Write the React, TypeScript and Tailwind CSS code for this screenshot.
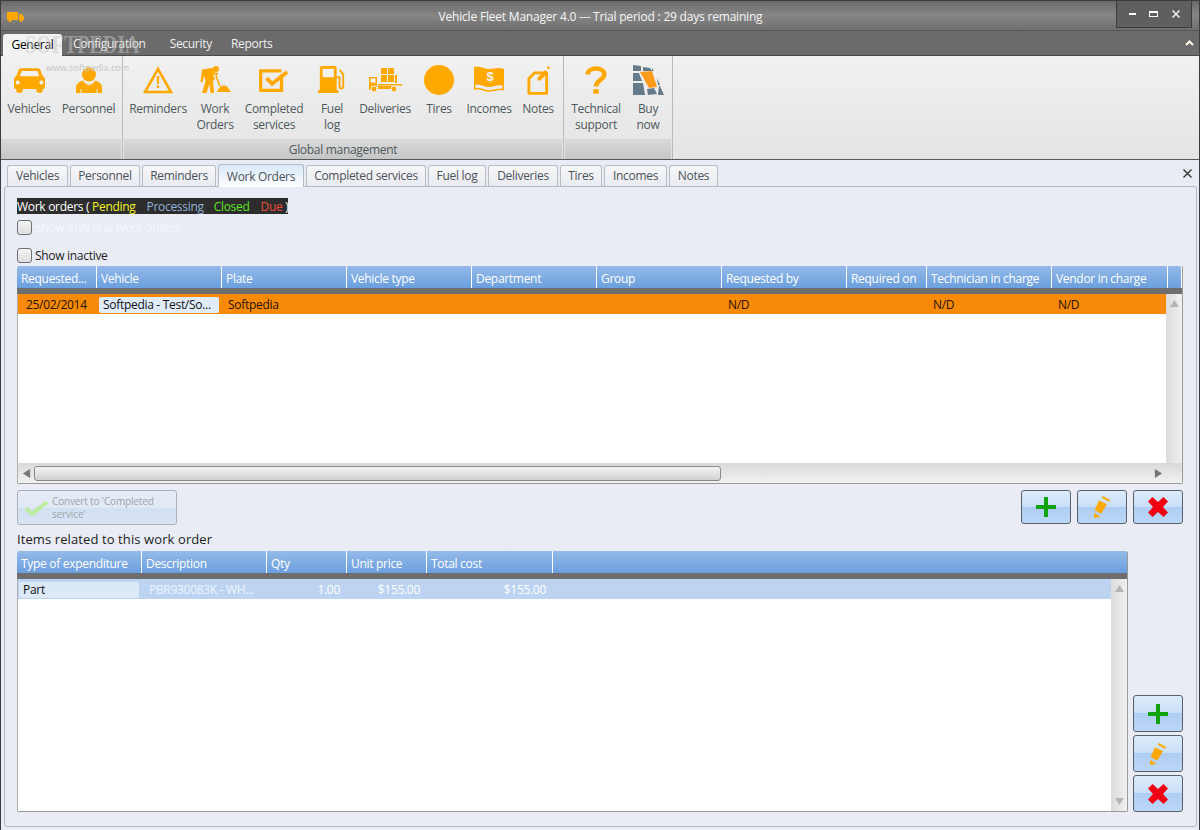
import React from "react";

const O = "#ffa800";

const icons: Record<string, React.ReactNode> = {
  car: (
    <svg width="31" height="26" viewBox="0 0 34 28">
      <path fill={O} d="M8 1h18c1.500 0 2.500 .8 3 2l2.600 7c1.500 .8 2.400 2 2.400 3.500V22a2 2 0 0 1-2 2h-.5v2a2 2 0 0 1-2 2h-3a2 2 0 0 1-2-2v-2H9.500v2a2 2 0 0 1-2 2h-3a2 2 0 0 1-2-2v-2H2a2 2 0 0 1-2-2v-8.500C0 12 1 10.800 2.400 10L5 3c.5-1.200 1.500-2 3-2z" />
      <path fill="#f2f2f2" d="M8.500 4h17l2.200 6H6.300zM4 14.500a2.300 2.300 0 1 0 .01 0zM30 14.500a2.300 2.300 0 1 0 .01 0z" />
    </svg>
  ),
  person: (
    <svg width="26" height="26" viewBox="0 0 26 26">
      <circle cx="13" cy="7.500" r="7" fill={O} />
      <path fill={O} d="M0 26v-5c0-4 2.500-6 7-7.500 1 2.500 3.500 3.500 6 3.500s5-1 6-3.500c4.500 1.500 7 3.500 7 7.500v5h-4.500v-4h-1v4h-15v-4h-1v4z" />
      <path fill="none" stroke="#f2f2f2" strokeWidth="1" d="M8 13c1 3.500 3.500 5 5 5s4-1.500 5-5" />
    </svg>
  ),
  warn: (
    <svg width="30" height="28" viewBox="0 0 30 28">
      <path fill="none" stroke={O} strokeWidth="2.600" d="M15 3 L28 26 H2 Z" />
      <path fill={O} d="M13.700 10h2.600l-.4 8h-1.800zM13.800 19.500h2.400v2.500h-2.400z" />
    </svg>
  ),
  worker: (
    <svg width="32" height="28" viewBox="0 0 32 28">
      <circle cx="17" cy="3" r="3" fill={O} />
      <path fill={O} d="M3 3.500 13 2c1.500 0 2 1 2 2l-.5 6 1.500 3-2 2 1 12h-3.500l-1-9-3 9H3l3.500-12L5 9.500 3.700 16H1.500z" />
      <path fill={O} d="M14 6l5 1v2l-5-1zM17.500 9l4 11h-1.500l-4-10.500z" />
      <path fill={O} d="M18 26c1-3 3-6 6.500-6.500S30 23 32 26z" />
    </svg>
  ),
  check: (
    <svg width="30" height="23" viewBox="0 0 32 24">
      <path fill="none" stroke={O} strokeWidth="3.500" d="M24 8v14.500H1.800V1.800H24" />
      <path fill="none" stroke={O} strokeWidth="4" d="M8 9.500l6 6L30 3" />
    </svg>
  ),
  fuel: (
    <svg width="30" height="28" viewBox="0 0 30 30">
      <path fill={O} d="M4 0h14a2 2 0 0 1 2 2v24h2v3H0v-3h2V2a2 2 0 0 1 2-2z" />
      <path fill="#f2f2f2" d="M5 3h12v9H5z" />
      <path fill="none" stroke={O} strokeWidth="2" d="M20 12h3v10a2 2 0 0 0 4 0V9l-4-5" />
    </svg>
  ),
  delivery: (
    <svg width="33" height="24" viewBox="0 0 33 24">
      <path fill={O} d="M12 0h6v6h-6zM19 0h6v6h-6zM12 7h6v7h-6zM19 7h6v7h-6zM26 7h2v8h-2z" />
      <path fill={O} d="M0 9h8v13H0zM9 16h24v1.500H9zM9 18h18v3H9z" />
      <path fill="#f2f2f2" d="M1.500 10.500h5v4h-5z" />
      <circle cx="5" cy="21" r="3" fill={O} stroke="#f2f2f2" />
      <circle cx="25" cy="21" r="3" fill={O} stroke="#f2f2f2" />
    </svg>
  ),
  tire: (
    <svg width="30" height="30" viewBox="0 0 30 30">
      <circle cx="15" cy="15" r="15" fill={O} />
    </svg>
  ),
  money: (
    <svg width="30" height="28" viewBox="0 0 30 28">
      <path fill={O} d="M0 1c5-2 10 2 15 2s10-2 15 0v17c-5-2-10 1-15 1S5 17 0 19z" />
      <path fill="none" stroke={O} strokeWidth="1.500" d="M.7 17v6c5-2 9.300 2 14.300 2s10-3 14.300-1.500v-4" />
      <text x="16" y="15" fontSize="13" fontWeight="700" fill="#f2f2f2" textAnchor="middle" fontFamily="Liberation Sans, sans-serif">$</text>
    </svg>
  ),
  note: (
    <svg width="23" height="30" viewBox="0 0 24 31">
      <path fill="none" stroke={O} strokeWidth="3" strokeLinejoin="round" d="M8 8H20.500V29.500H2V14z" />
      <path fill={O} d="M11 13 19 5l3 3-8 8h-3z" />
      <path fill={O} d="M20.500 2.500l1.500-1.500 2 2-1.500 1.500z" />
    </svg>
  ),
  help: (
    <svg width="22" height="30" viewBox="0 0 24 30">
      <path fill="none" stroke={O} strokeWidth="5" d="M3 9c0-4 4-6.500 9-6.500s9 2.500 9 6.500c0 6-9 6-9 13" />
      <path fill={O} d="M9 25h6v5H9z" />
    </svg>
  ),
  buy: (
    <svg width="31" height="30" viewBox="0 0 31 30">
      <path fill="#667b8a" d="M0 0l8 1v5H0zM10 2l7 1 2 3h-9zM19 3l2 3h-2zM0 8h6l3 8H0zM0 18h10l2 12H0zM14 24l7-1 3 6-9 1zM26 21l1 0 4 9h-6zM24 13l3 7h-2z" />
      <path fill="#ff9a1a" d="M7 7l12-1 5 16-8 1z" />
    </svg>
  ),
};

function RibbonButton({ w, icon, lines }: { w: string; icon: string; lines: string[] }) {
  return (
    <div className={`${w} flex flex-col items-center shrink-0`}>
      <div className="h-[45px] flex items-center justify-center pt-[3px]">{icons[icon]}</div>
      <div className="text-[12px] leading-[16px] text-[#4e5a5e] text-center whitespace-nowrap">
        {lines.map((l) => (
          <div key={l}>{l}</div>
        ))}
      </div>
    </div>
  );
}

function RibbonGroup({ w, label, children }: { w: string; label?: string; children: React.ReactNode }) {
  return (
    <div className={`${w} shrink-0 flex flex-col border-r border-[#b9b9b9] h-full`}>
      <div className="flex-1 flex">{children}</div>
      <div className="h-[20px] mr-[1px] bg-linear-to-b from-[#dadada] to-[#c6c6c6] text-[12px] leading-[21px] text-center text-[#4e5a5e]">
        {label}
      </div>
    </div>
  );
}

const tabs: [string, string][] = [
  ["Vehicles", "w-[61px]"],
  ["Personnel", "w-[70px]"],
  ["Reminders", "w-[74px]"],
  ["Work Orders", "w-[86px]"],
  ["Completed services", "w-[120px]"],
  ["Fuel log", "w-[58px]"],
  ["Deliveries", "w-[70px]"],
  ["Tires", "w-[42px]"],
  ["Incomes", "w-[63px]"],
  ["Notes", "w-[49px]"],
];

function Plus() {
  return (
    <svg width="20" height="20" viewBox="0 0 20 20">
      <path fill="#10a30f" d="M8 0h4v8h8v4h-8v8H8v-8H0V8h8z" />
    </svg>
  );
}
function Pencil() {
  return (
    <svg width="16" height="22" viewBox="0 0 16 22">
      <path fill={O} d="M5 4.300 13 8.300 7 17.700 .7 14zM8.700 0 16 4l-1 1.800-7.300-4zM0 16.700 6.700 21 0 21.800z" />
    </svg>
  );
}
function Cross() {
  return (
    <svg width="20" height="20" viewBox="0 0 20 20">
      <path fill="#f00010" d="M4.500 0 10 5 15.500 0 20 4.500 15 10l5 5.500L15.500 20 10 15l-5.500 5L0 15.500 5 10 0 4.500z" />
    </svg>
  );
}

function ActionButton({ h, children }: { h: string; children: React.ReactNode }) {
  return (
    <div className={`w-[50px] ${h} rounded-[3px] border border-[#58606c] flex items-center justify-center bg-[linear-gradient(to_bottom,#dcebfb_0%,#c8dff8_50%,#aecdf4_50%,#bcd6f6_100%)]`}>
      {children}
    </div>
  );
}

function HeaderRow({ cols, extra }: { cols: [string, string][]; extra?: boolean }) {
  return (
    <div className="h-[22px] flex shrink-0 rounded-t-[2px] bg-linear-to-b from-[#94bae8] to-[#6b9fde]">
      {cols.map(([label, w]) => (
        <div key={label} className={`${w} shrink-0 border-r border-white pl-[4px] text-[12px] leading-[25px] text-white whitespace-nowrap overflow-hidden`}>
          {label}
        </div>
      ))}
      {extra && <div className="flex-1" />}
    </div>
  );
}

function Tri({ d, fill = "#777" }: { d: string; fill?: string }) {
  return (
    <svg width="9" height="9" viewBox="0 0 10 10">
      <path fill={fill} d={d} />
    </svg>
  );
}

function Checkbox({ label, className }: { label: string; className: string }) {
  return (
    <div className="flex items-center h-[15px]">
      <div className="w-[15px] h-[15px] rounded-[3px] border border-[#6d7278] bg-linear-to-b from-[#f4f4f4] to-[#dedede]" />
      <span className={`ml-[3px] text-[12px] leading-[15px] ${className}`}>{label}</span>
    </div>
  );
}

const cols1: [string, string][] = [
  ["Requested...", "w-[80px]"],
  ["Vehicle", "w-[125px]"],
  ["Plate", "w-[125px]"],
  ["Vehicle type", "w-[125px]"],
  ["Department", "w-[125px]"],
  ["Group", "w-[125px]"],
  ["Requested by", "w-[125px]"],
  ["Required on", "w-[80px]"],
  ["Technician in charge", "w-[125px]"],
  ["Vendor in charge", "w-[116px]"],
];

const cols2: [string, string][] = [
  ["Type of expenditure", "w-[125px]"],
  ["Description", "w-[125px]"],
  ["Qty", "w-[80px]"],
  ["Unit price", "w-[80px]"],
  ["Total cost", "w-[126px]"],
];

export default function App() {
  return (
    <div
      className="relative w-[1200px] h-[830px] overflow-hidden bg-[#e9ecf5] border-x border-t border-[#3c3c3c] flex flex-col tracking-[-0.3px]"
      style={{ fontFamily: '"Open Sans", "Noto Sans", sans-serif' }}
    >
      {/* Title bar */}
      <div className="relative h-[30px] shrink-0 flex items-center justify-center bg-linear-to-b from-[#6b6b6b] via-[#868686] to-[#6e6e6e] border-b border-[#555]">
        <svg className="absolute left-[6px] top-[11px]" width="18" height="10" viewBox="0 0 18 10">
          <path fill={O} d="M0 0h11v8H0zM12 2h3l2 3v3h-5z" />
          <circle cx="3" cy="8.500" r="1.500" fill={O} />
          <circle cx="14" cy="8.500" r="1.500" fill={O} />
        </svg>
        <span className="text-[12px] tracking-[-0.2px] text-[#f5f5f5] pl-[1px] pt-[2px]">Vehicle Fleet Manager 4.0 --- Trial period : 29 days remaining</span>
        <div className="absolute right-[7px] top-[-1px] w-[76px] h-[28px] bg-[#5f5f5f] border border-[#3d3d3d] border-t-0 flex items-center">
          <div className="ml-[12px] w-[7px] h-[2px] bg-white" />
          <div className="ml-[13px] w-[9px] h-[6px] border border-white border-t-2" />
          <svg className="ml-[14px]" width="8" height="8" viewBox="0 0 8 8">
            <path stroke="#f0f0f0" strokeWidth="1.500" d="M.5.5l7 7M7.500.5l-7 7" />
          </svg>
        </div>
      </div>

      {/* Menu */}
      <div className="relative h-[25px] shrink-0 bg-[#6b6b6b] border-b border-[#4a4a4a] flex items-end pl-[2px]">
        <div className="w-[59px] h-[22px] mb-[-1px] bg-[#f2f2f2] rounded-t-[3px] text-center text-[12px] leading-[22px] text-black">General</div>
        <div className="ml-[11px] text-[12px] leading-[22px] text-[#f0f0f0]">Configuration</div>
        <div className="ml-[24px] text-[12px] leading-[22px] text-[#f0f0f0]">Security</div>
        <div className="ml-[19px] text-[12px] leading-[22px] text-[#f0f0f0]">Reports</div>
        <svg className="absolute right-[5px] top-[9px]" width="9" height="6" viewBox="0 0 9 6">
          <path fill="none" stroke="#fff8e8" strokeWidth="2" d="M1 5l3.500-3.500L8 5" />
        </svg>
      </div>

      {/* Ribbon */}
      <div className="h-[104px] shrink-0 flex bg-linear-to-b from-[#f1f1f1] to-[#e4e4e4] border-b border-[#55595e]">
        <RibbonGroup w="w-[122px]">
          <RibbonButton w="w-[56px]" icon="car" lines={["Vehicles"]} />
          <RibbonButton w="w-[63px]" icon="person" lines={["Personnel"]} />
        </RibbonGroup>
        <div className="w-[1px]" />
        <RibbonGroup w="w-[440px]" label="Global management">
          <RibbonButton w="w-[68px]" icon="warn" lines={["Reminders"]} />
          <RibbonButton w="w-[46px]" icon="worker" lines={["Work", "Orders"]} />
          <RibbonButton w="w-[72px]" icon="check" lines={["Completed", "services"]} />
          <RibbonButton w="w-[44px]" icon="fuel" lines={["Fuel", "log"]} />
          <RibbonButton w="w-[62px]" icon="delivery" lines={["Deliveries"]} />
          <RibbonButton w="w-[46px]" icon="tire" lines={["Tires"]} />
          <RibbonButton w="w-[54px]" icon="money" lines={["Incomes"]} />
          <RibbonButton w="w-[44px]" icon="note" lines={["Notes"]} />
        </RibbonGroup>
        <div className="w-[1px]" />
        <RibbonGroup w="w-[108px]">
          <RibbonButton w="w-[62px]" icon="help" lines={["Technical", "support"]} />
          <RibbonButton w="w-[42px]" icon="buy" lines={["Buy", "now"]} />
        </RibbonGroup>
      </div>

      {/* Document tabs */}
      <div className="relative flex-1 flex flex-col pl-[3px] pr-[2px] pb-[3px] bg-[#e9ecf5]">
        <div className="h-[26px] shrink-0 flex items-end gap-[2px] pl-[3px]">
          {tabs.map(([t, w]) =>
            t === "Work Orders" ? (
              <div key={t} className={`${w} h-[23px] mb-[-1px] z-10 rounded-t-[3px] border border-b-0 border-[#b5b8bd] bg-linear-to-b from-[#d9e8fb] to-white text-center text-[12px] leading-[23px] text-[#4c5358]`}>
                {t}
              </div>
            ) : (
              <div key={t} className={`${w} h-[21px] rounded-t-[3px] border border-b-0 border-[#b9bcc2] bg-linear-to-b from-[#f8f8fa] to-[#e8eaf0] text-center text-[12px] leading-[20px] text-[#4c5358]`}>
                {t}
              </div>
            )
          )}
          <svg className="absolute right-[7px] top-[9px]" width="9" height="9" viewBox="0 0 9 9">
            <path stroke="#333" strokeWidth="1.400" d="M.5.5l8 8M8.500.5l-8 8" />
          </svg>
        </div>

        <div className="flex-1 rounded-[3px] border border-[#b5b8bd] pl-[12px] pr-[13px] pt-[11px] flex flex-col">
          {/* legend */}
          <div className="self-start w-[271px] h-[16px] bg-[#2d2d2d] text-[12px] leading-[17px] whitespace-nowrap">
            <span className="text-white">Work orders ( </span>
            <span className="text-[#f2f21e]">Pending</span>
            <span className="ml-[11px] text-[#8fb0d8]">Processing</span>
            <span className="ml-[10px] text-[#5de61e]">Closed</span>
            <span className="ml-[11px] text-[#ef4a3a]">Due</span>
            <span className="text-white"> )</span>
          </div>
          <div className="mt-[6px]">
            <Checkbox label="Show only due work orders" className="text-[#f6f7fa]" />
          </div>
          <div className="mt-[13px]">
            <Checkbox label="Show inactive" className="text-[#222]" />
          </div>

          {/* main grid */}
          <div className="mt-[3px] h-[218px] shrink-0 flex flex-col rounded-[2px] border-b border-r border-[#9a9a9a] bg-white">
            <div className="pr-[1px]"><HeaderRow cols={cols1} extra /></div>
            <div className="h-[6px] shrink-0 bg-[#6e6e6e]" />
            <div className="flex-1 flex min-h-0">
              <div className="flex-1 border-l border-[#b0b0b0] min-w-0">
                <div className="h-[21px] pt-[1px] flex items-center bg-[#f98a08] border-b border-white text-[12px] text-[#1c1206] whitespace-nowrap">
                  <div className="w-[80px] pl-[8px]">25/02/2014</div>
                  <div className="w-[125px] pl-[1px]">
                    <div className="w-[120px] h-[16px] rounded-[2px] bg-[#e0ecfa] pl-[4px] leading-[16px] text-[#111]">Softpedia - Test/So...</div>
                  </div>
                  <div className="w-[498px] pl-[5px]">Softpedia</div>
                  <div className="w-[205px] pl-[7px]">N/D</div>
                  <div className="w-[125px] pl-[7px]">N/D</div>
                  <div className="pl-[7px]">N/D</div>
                </div>
              </div>
              <div className="w-[16px] shrink-0 bg-linear-to-r from-[#dcdcdc] to-[#f0f0f0] flex flex-col items-center justify-between py-[5px]">
                <Tri d="M5 1l5 8H0z" fill="#b4b4b4" />
              </div>
            </div>
            <div className="h-[20px] shrink-0 flex items-center bg-linear-to-b from-[#d9d9d9] to-[#f2f2f2] border-l border-[#b0b0b0]">
              <div className="w-[16px] flex justify-center">
                <Tri d="M1 5l8-5v10z" />
              </div>
              <div className="w-[687px] h-[15px] rounded-[3px] border border-[#8a8a8a] bg-linear-to-b from-[#f4f4f4] to-[#d2d2d2]" />
              <div className="flex-1" />
              <div className="w-[16px] flex justify-center mr-[16px]">
                <Tri d="M9 5l-8-5v10z" />
              </div>
            </div>
          </div>

          {/* actions */}
          <div className="mt-[6px] h-[35px] shrink-0 flex items-start justify-between">
            <div className="w-[160px] h-[35px] rounded-[3px] border border-[#a9b0ba] flex items-center pl-[6px] bg-[linear-gradient(to_bottom,#e6edf7_0%,#dfe8f5_50%,#d2e0f3_50%,#d9e4f4_100%)]">
              <svg width="24" height="17" viewBox="0 0 24 17">
                <path fill="none" stroke="#bdeb9f" strokeWidth="4" d="M2 9l6 6L23 3" />
              </svg>
              <span className="ml-[4px] text-[10px] leading-[13px] tracking-[-0.15px] text-[#a0a4a8]">
                Convert to 'Completed<br />service'
              </span>
            </div>
            <div className="flex gap-[6px]">
              <ActionButton h="h-[34px]"><Plus /></ActionButton>
              <ActionButton h="h-[34px]"><Pencil /></ActionButton>
              <ActionButton h="h-[34px]"><Cross /></ActionButton>
            </div>
          </div>

          <div className="mt-[4px] text-[13px] leading-[20px] tracking-[0.1px] text-[#222]">Items related to this work order</div>

          {/* items grid */}
          <div className="mt-[2px] flex-1 flex gap-[5px] pb-[14px] min-h-0">
            <div className="flex-1 flex flex-col rounded-[2px] border-b border-r border-[#9a9a9a] bg-white min-w-0">
              <HeaderRow cols={cols2} extra />
              <div className="h-[6px] shrink-0 bg-[#6e6e6e]" />
              <div className="flex-1 flex min-h-0">
                <div className="flex-1 border-l border-[#b0b0b0] min-w-0">
                  <div className="h-[21px] pt-[1px] flex items-center bg-[#bcd4f1] border-b border-white text-[12px] whitespace-nowrap">
                    <div className="w-[125px] pl-[1px]">
                      <div className="w-[120px] h-[16px] rounded-[2px] bg-[#dce9f9] pl-[4px] leading-[16px] text-[#111]">Part</div>
                    </div>
                    <div className="w-[125px] pl-[6px] text-[#eef4fc]">PBR930083K - WH...</div>
                    <div className="w-[72px] text-right text-white">1.00</div>
                    <div className="w-[80px] text-right text-white">$155.00</div>
                    <div className="w-[126px] text-right text-white">$155.00</div>
                  </div>
                </div>
                <div className="w-[16px] shrink-0 bg-linear-to-r from-[#dcdcdc] to-[#f0f0f0] flex flex-col items-center justify-between py-[5px]">
                  <Tri d="M5 1l5 8H0z" fill="#b4b4b4" />
                  <Tri d="M5 9l5-8H0z" fill="#b4b4b4" />
                </div>
              </div>
            </div>
            <div className="w-[50px] shrink-0 flex flex-col justify-end gap-[3px]">
              <ActionButton h="h-[37px]"><Plus /></ActionButton>
              <ActionButton h="h-[37px]"><Pencil /></ActionButton>
              <ActionButton h="h-[37px]"><Cross /></ActionButton>
            </div>
          </div>
        </div>
      </div>

      {/* Watermark over the ribbon */}
      <div className="absolute left-[24px] top-[31px] text-[20px] leading-[24px] font-bold tracking-[0px] scale-y-[1.3] text-[#c4c4c4]/50 pointer-events-none" style={{ fontFamily: '"Liberation Serif", serif' }}>
        SOFTPEDIA
      </div>
      <div className="absolute left-[45px] top-[61px] text-[9px] leading-[12px] tracking-normal text-[#c4c4c4] pointer-events-none">www.softpedia.com</div>
    </div>
  );
}
